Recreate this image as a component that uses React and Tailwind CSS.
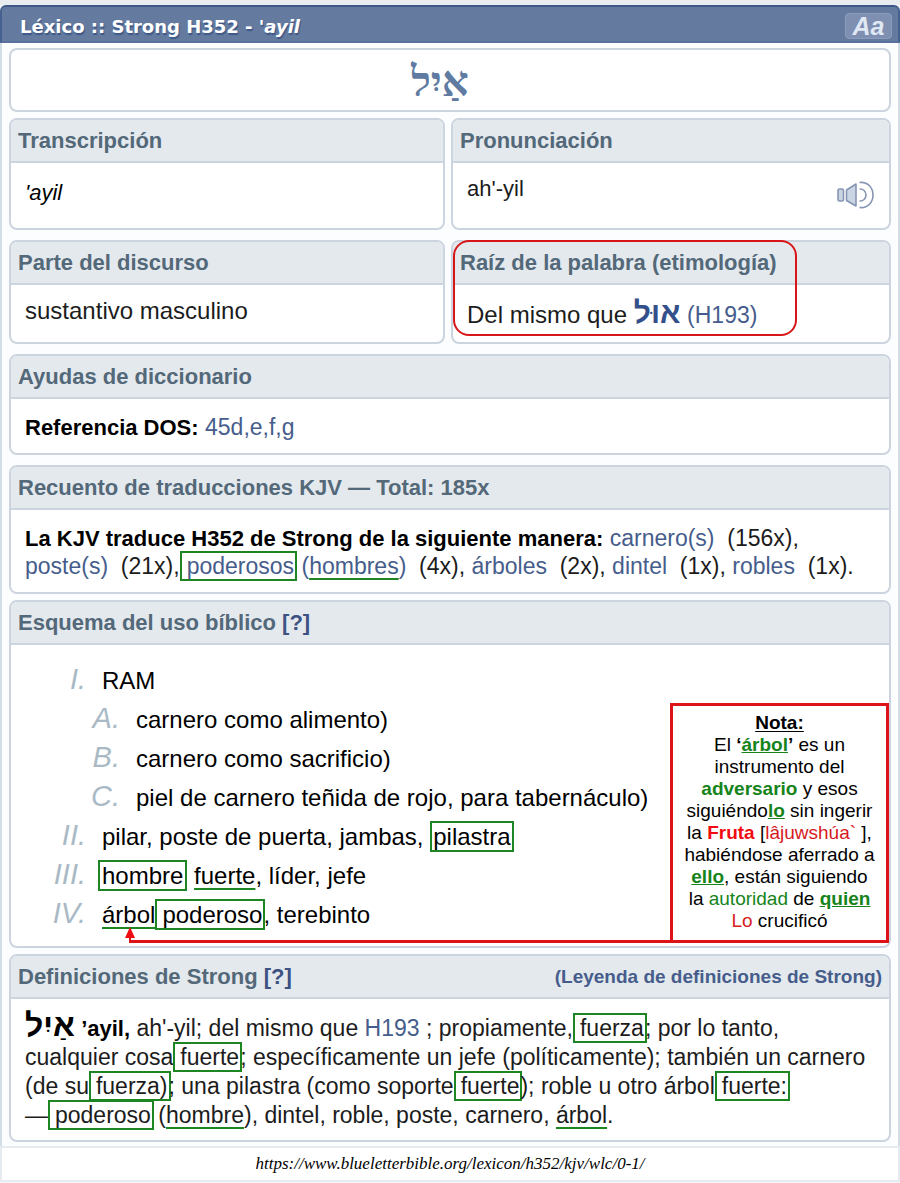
import clsx from 'clsx';

const SANS = "font-['Liberation_Sans',Arial,sans-serif]";

function Card({ title, aside, className, bodyClassName, children }) {
  return (
    <section className={clsx('flex flex-col overflow-hidden rounded-lg border-2 border-[#ccd5df] bg-white', className)}>
      {title && (
        <header className="flex h-[43px] shrink-0 items-center justify-between border-b-2 border-[#ccd5df] bg-[#e4e9ee] px-[7px]">
          <h2 className="text-[22px] leading-7 font-bold whitespace-nowrap text-[#536878]">{title}</h2>
          {aside}
        </header>
      )}
      <div className={clsx('grow', bodyClassName)}>{children}</div>
    </section>
  );
}

// Word framed in green, the frame takes the place of the space before it
function Box({ children, className }) {
  return <span className={clsx('border-2 border-[#1e8523]', className || '-mr-0.5 pr-px pl-[5px]')}>{children}</span>;
}

// Word underlined in green
function Mark({ children }) {
  return <span className="underline decoration-[#1e8523] decoration-2 underline-offset-4">{children}</span>;
}

function Ref({ children, className }) {
  return (
    <a href="#" className={clsx('text-[#465d8c]', className)}>
      {children}
    </a>
  );
}

function Help() {
  return (
    <a href="#" className="text-[#3c5283]">
      [?]
    </a>
  );
}

function SpeakerIcon() {
  return (
    <svg className="h-7 w-[38px]" viewBox="0 0 38 28" fill="none" stroke="#8795b5" strokeWidth="1.6">
      <rect x="1" y="8" width="5.500" height="12" rx="1.5" fill="#c9d5e3" />
      <path d="M9.500 9 L19 3 V25 L9.500 19.500 Z" fill="#c9d5e3" strokeLinejoin="round" />
      <path d="M22.500 8 C26 7.500 29 10.500 29 14 C29 17.500 26 20.500 22.500 20" />
      <path d="M22.500 1.500 C31 0.500 36 7 36 14 C36 21 31 27.500 22.500 26.500" />
    </svg>
  );
}

function Item({ marker, sub, children }) {
  return (
    <li className="flex h-[39px] items-baseline leading-[39px] whitespace-nowrap">
      <span
        className={clsx(
          'mr-4 shrink-0 text-right text-[29px] text-[#a9bac6] italic',
          sub ? 'w-[109px]' : 'w-[75px]'
        )}
      >
        {marker}
      </span>
      <span>{children}</span>
    </li>
  );
}

function Note() {
  return (
    <aside className="absolute right-0.5 bottom-[5px] w-[219px] border-3 border-[#dc1418] bg-white pt-1.5 pb-2 text-center text-[19px] leading-[22px] whitespace-nowrap text-black">
      <p className="font-bold underline underline-offset-2">Nota:</p>
      <p>
        El <b>‘<u className="text-[#16841b]">árbol</u>’</b> es un
      </p>
      <p>instrumento del</p>
      <p>
        <b className="text-[#16841b]">adversario</b> y esos
      </p>
      <p>
        siguiéndo<b className="text-[#16841b] underline">lo</b> sin ingerir
      </p>
      <p>
        la <b className="text-[#f00c10]">Fruta</b> [<span className="text-[#d81a1e]">lâjuwshúa`</span> ],
      </p>
      <p>habiéndose aferrado a</p>
      <p>
        <b className="text-[#16841b] underline">ello</b>, están siguiendo
      </p>
      <p>
        la <span className="text-[#16841b]">autoridad</span> de <b className="text-[#16841b] underline">quien</b>
      </p>
      <p>
        <span className="text-[#d81a1e]">Lo</span> crucificó
      </p>
    </aside>
  );
}

export default function App() {
  return (
    <div className={clsx('bg-[#f4f6f7] pb-1 text-[23px] text-[#1c1c1c]', SANS)}>
      <div className="h-[5px] bg-[#e9edf0]" />
      <header className="flex h-[38px] items-center justify-between rounded-t-md border-2 border-t-[#3e5888] border-r-[#46608f] border-b-[#5a719f] border-l-[#46608f] bg-[#647b9f] pt-1 pr-1.5 pl-[18px]">
        <h1 className="pt-0.5 font-['DejaVu_Sans',Verdana,sans-serif] text-[18px] leading-6 font-bold whitespace-nowrap text-white text-shadow-[1px_2px_1px_#3e5888]">
          Léxico :: Strong H352 - <i>'ayil</i>
        </h1>
        <button
          type="button"
          className="h-[26px] w-[47px] rounded border border-[#8b9cbd] bg-[#7e8fb1] text-center text-[25px] leading-6 font-bold text-[#e0e8f3] italic"
        >
          Aa
        </button>
      </header>

      <main className="border-x-2 border-[#d3dde6] bg-[#fcfdfe] px-[7px] pt-[5px] pb-1">
        <Card className="mb-1.5" bodyClassName="flex h-[60px] items-center justify-center pr-5 pt-1">
          <span
            lang="he"
            dir="rtl"
            className="font-['Liberation_Serif','Times_New_Roman',serif] text-[42px] leading-[56px] font-bold text-[#5f7ba2]"
          >
            אַיִל
          </span>
        </Card>

        <div className="mb-2.5 grid grid-cols-[109fr_110fr] gap-1.5">
          <Card title="Transcripción" bodyClassName="h-[65px] px-3.5 pt-4">
            <p className="text-[22px] leading-7 text-black italic">'ayil</p>
          </Card>
          <Card title="Pronunciación" bodyClassName="flex h-[65px] items-start justify-between px-3.5 pt-3">
            <p className="text-[22px] leading-7">ah'-yil</p>
            <button type="button" aria-label="Escuchar" className="mt-1.5">
              <SpeakerIcon />
            </button>
          </Card>
        </div>

        <div className="mb-2.5 grid grid-cols-[109fr_110fr] gap-1.5">
          <Card title="Parte del discurso" bodyClassName="h-[57px] px-3.5 pt-3">
            <p className="text-[24px] leading-7">sustantivo masculino</p>
          </Card>
          <div className="relative">
            <Card title="Raíz de la palabra (etimología)" bodyClassName="h-[57px] px-3.5 pt-3">
              <p className="text-[24px] leading-8 whitespace-nowrap">
                Del mismo que{' '}
                <a href="#" lang="he" className="text-[30px] leading-8 font-bold text-[#34508a]">
                  אוּל
                </a>{' '}
                <Ref className="text-[23px]">(H193)</Ref>
              </p>
            </Card>
            <div className="pointer-events-none absolute top-0 left-0.5 h-24 w-[344px] rounded-2xl border-2 border-[#d8161a]" />
          </div>
        </div>

        <Card title="Ayudas de diccionario" className="mb-2.5" bodyClassName="px-3.5 pt-3.5 pb-3">
          <p className="leading-7">
            <b className="text-[22px] leading-none text-black">Referencia DOS:</b> <Ref>45d,e,f,g</Ref>
          </p>
        </Card>

        <Card
          title="Recuento de traducciones KJV — Total: 185x"
          className="mb-1.5"
          bodyClassName="px-3.5 pt-3.5 pb-3 leading-7 whitespace-nowrap"
        >
          <p>
            <b className="text-[22px] leading-none text-black">
              La KJV traduce H352 de Strong de la siguiente manera:
            </b>{' '}
            <Ref>carnero(s)</Ref>
            &nbsp; (156x),
          </p>
          <p>
            <Ref>poste(s)</Ref>&nbsp; (21x),
            <Box>
              <Ref>poderosos</Ref>
            </Box>{' '}
            <Ref>
              (<Mark>hombres</Mark>)
            </Ref>
            &nbsp; (4x), <Ref>árboles</Ref>&nbsp; (2x), <Ref>dintel</Ref>&nbsp; (1x), <Ref>robles</Ref>&nbsp; (1x).
          </p>
        </Card>

        <div className="relative mb-1.5">
          <Card
            title={
              <>
                Esquema del uso bíblico <Help />
              </>
            }
            bodyClassName="pt-[15px] pb-[13px]"
          >
            <ol className="text-[24px] text-black">
              <Item marker="I.">RAM</Item>
              <li>
                <ol>
                  <Item marker="A." sub>carnero como alimento)</Item>
                  <Item marker="B." sub>carnero como sacrificio)</Item>
                  <Item marker="C." sub>piel de carnero teñida de rojo, para tabernáculo)</Item>
                </ol>
              </li>
              <Item marker="II.">
                pilar, poste de puerta, jambas, <Box className="px-px">pilastra</Box>
              </Item>
              <Item marker="III.">
                <Box className="-ml-1 px-0.5">hombre</Box> <Mark>fuerte</Mark>, líder, jefe
              </Item>
              <Item marker="IV.">
                <Mark>árbol</Mark>
                <Box>poderoso</Box>, terebinto
              </Item>
            </ol>
          </Card>

          {/* connector from the note to "árbol" */}
          <div className="absolute right-[220px] bottom-[5px] left-[120px] h-3 border-b-3 border-l-2 border-[#dc1418]">
            <svg className="absolute -top-1 -left-1.5 h-[11px] w-2.5" viewBox="0 0 10 11">
              <path d="M5 0 L10 11 H0 Z" fill="#f00c10" />
            </svg>
          </div>
          <Note />
        </div>

        <Card
          title={
            <>
              Definiciones de Strong <Help />
            </>
          }
          aside={
            <a href="#" className="text-[19px] leading-6 font-bold whitespace-nowrap text-[#465d8c]">
              (Leyenda de definiciones de Strong)
            </a>
          }
          bodyClassName="px-3.5 py-2.5 leading-[29px] whitespace-nowrap"
        >
          <p>
            <b lang="he" className="text-[32px] leading-none text-black">
              אַיִל
            </b>{' '}
            <b className="text-[22px] leading-none text-black">’ayil,</b> ah'-yil; del mismo que <Ref>H193</Ref> ;
            propiamente,
            <Box>fuerza</Box>; por lo tanto,
          </p>
          <p>
            cualquier cosa<Box>fuerte</Box>; específicamente un jefe (políticamente); también un carnero
          </p>
          <p>
            (de su<Box>fuerza)</Box>; una pilastra (como soporte<Box>fuerte</Box>); roble u otro árbol
            <Box>fuerte:</Box>
          </p>
          <p>
            —<Box>poderoso</Box> (<Mark>hombre</Mark>), dintel, roble, poste, carnero, <Mark>árbol</Mark>.
          </p>
        </Card>
      </main>

      <footer className="border-2 border-[#e6ebf0] bg-white py-1 text-center font-['Liberation_Serif','Times_New_Roman',serif] text-[17px] leading-6 text-black italic">
        https://www.blueletterbible.org/lexicon/h352/kjv/wlc/0-1/
      </footer>
    </div>
  );
}
